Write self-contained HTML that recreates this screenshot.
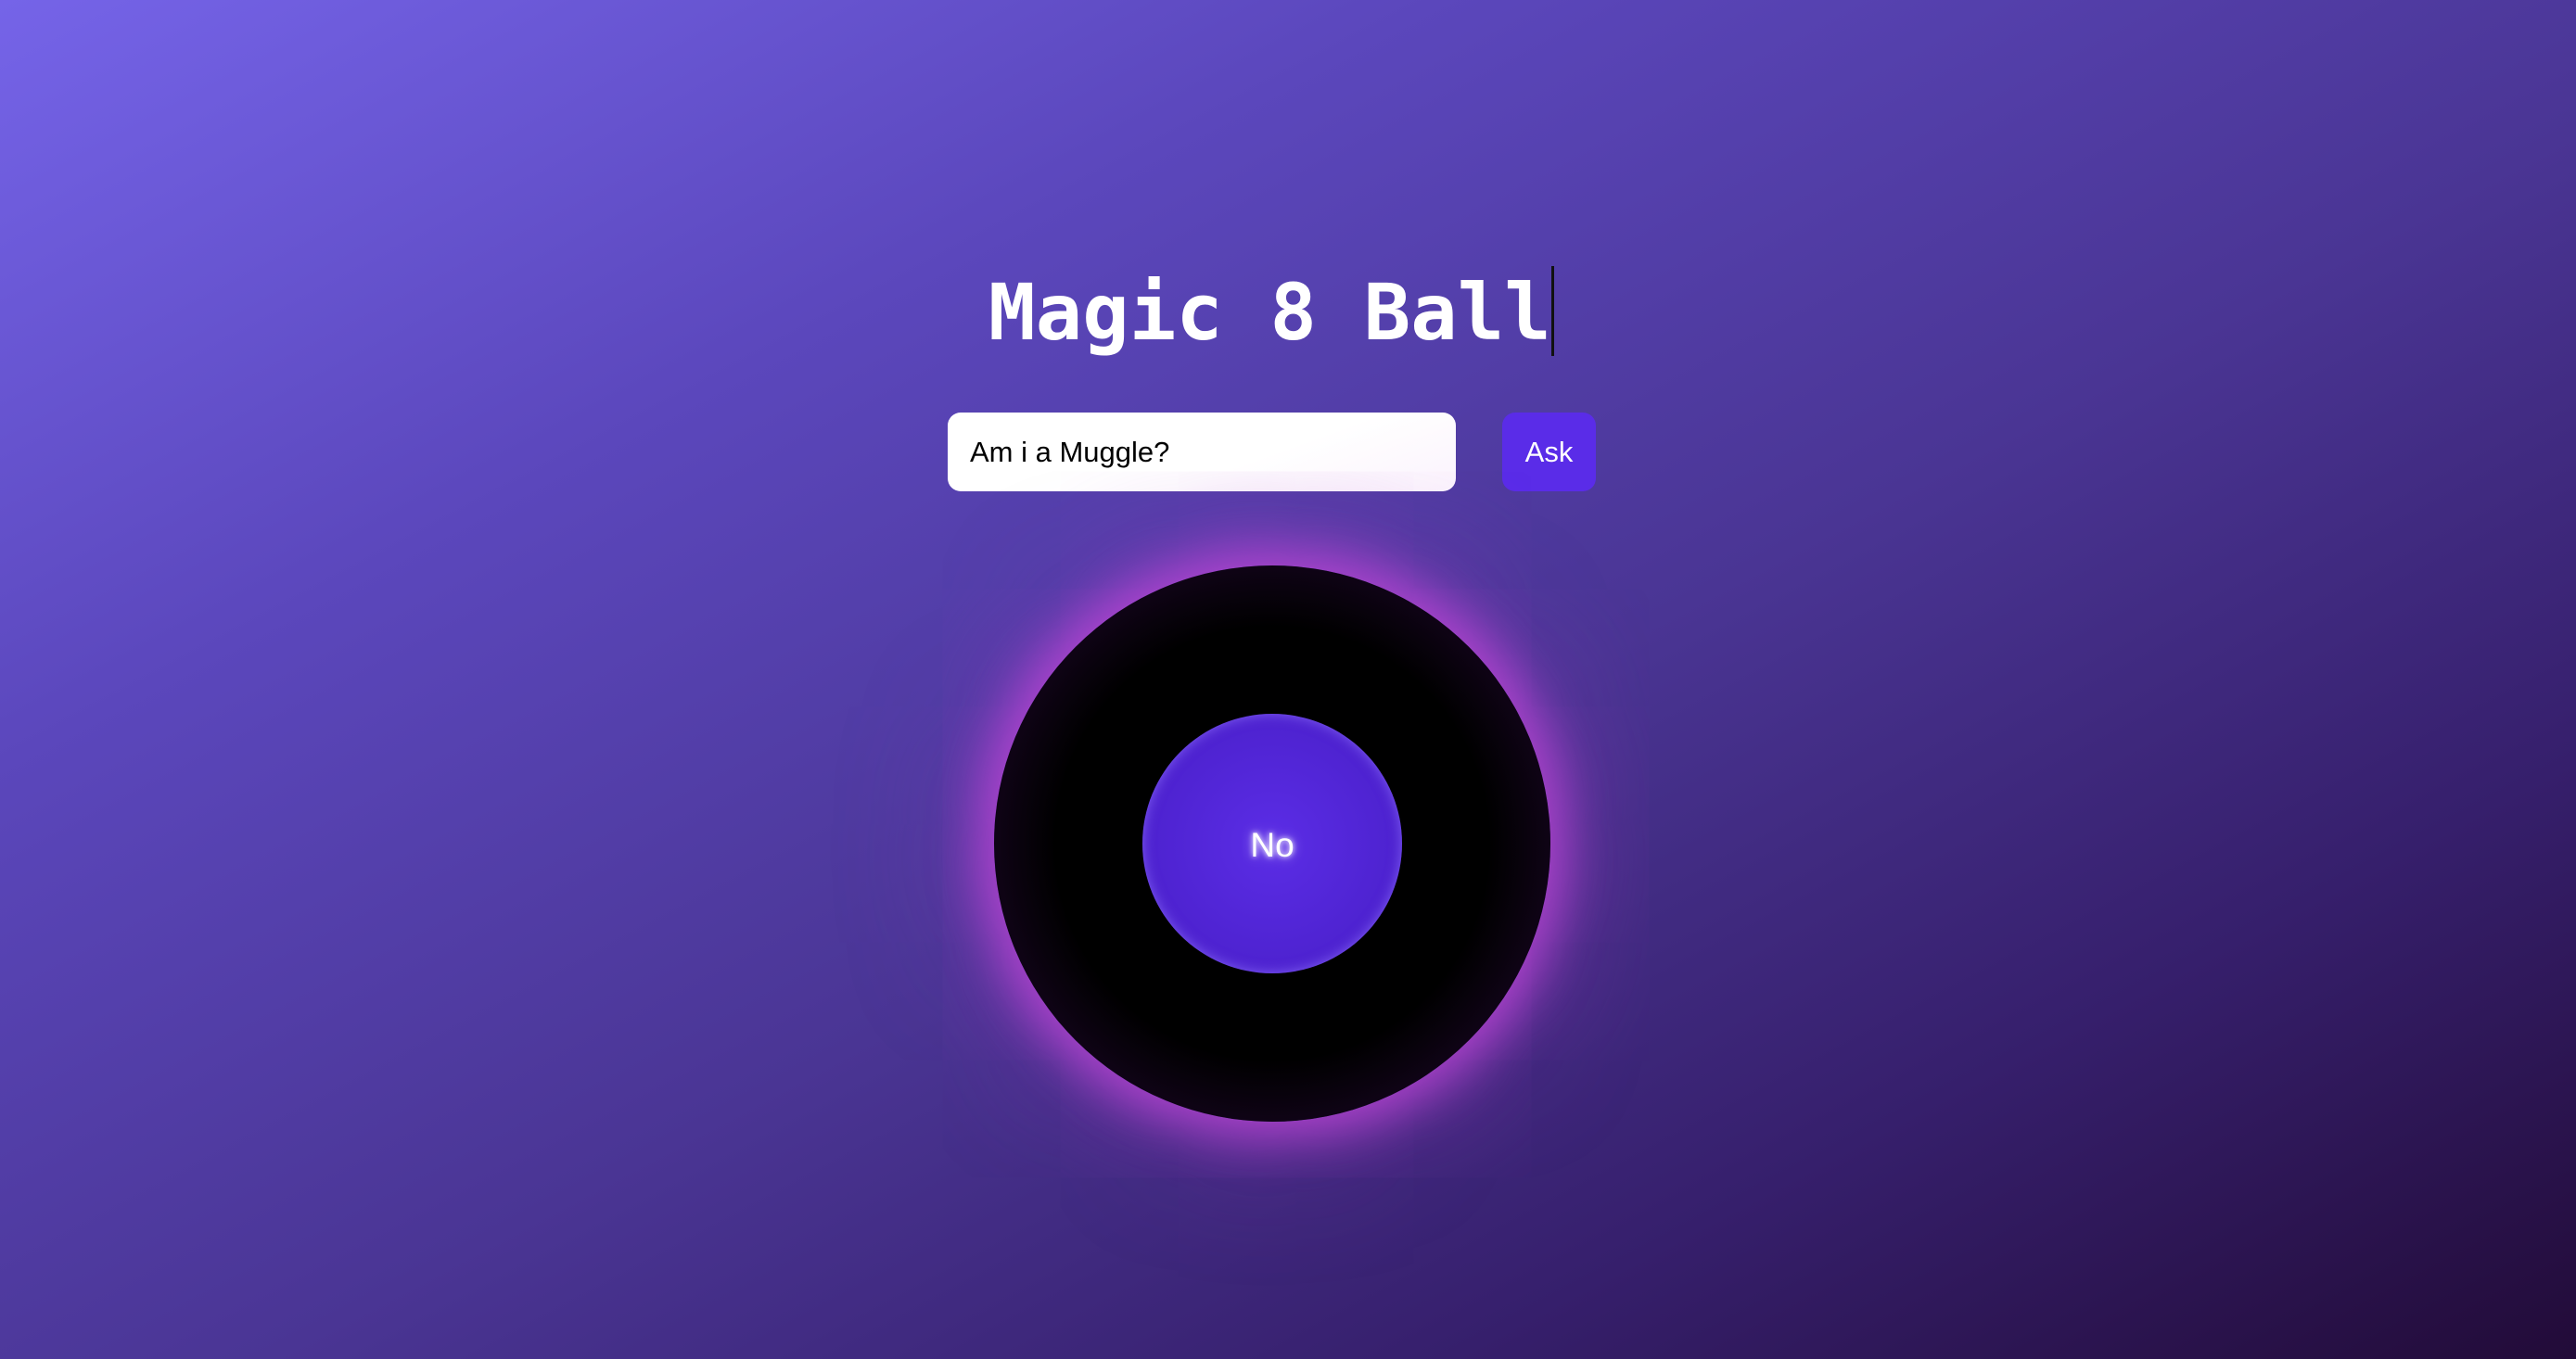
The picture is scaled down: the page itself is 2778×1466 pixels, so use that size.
<!DOCTYPE html>
<html><head><style>
html,body{margin:0;padding:0;width:2778px;height:1466px;overflow:hidden}
body{background:linear-gradient(152deg,#7564e8 0%,#5b47bc 28%,#4a3594 55%,#361f6c 78%,#220b38 100%);position:relative;font-family:"Liberation Sans",Arial,sans-serif}
.title{position:absolute;left:1066px;top:277px;font-family:"DejaVu Sans Mono","Liberation Mono",monospace;font-weight:bold;font-size:84px;color:#fff;line-height:120px;white-space:nowrap}
.cursor{position:absolute;left:1673px;top:287px;width:3px;height:97px;background:#111}
.input{position:absolute;left:1022px;top:445px;width:548px;height:85px;background:linear-gradient(160deg,#fff 60%,#fbf3fd);border-radius:14px;box-sizing:border-box;padding-left:24px;font-size:31px;line-height:85px;color:#000}
.btn{position:absolute;left:1620px;top:445px;width:101px;height:85px;background:#5a2ce8;border-radius:14px;color:#fff;font-size:31px;line-height:85px;text-align:center}
.ball{position:absolute;left:1072px;top:610px;width:600px;height:600px;border-radius:50%;background:radial-gradient(circle,#000 0%,#000 55%,#12041a 74%,#3a1045 90%,#5a1a66 100%);box-shadow:0 0 50px 18px rgba(190,70,215,.8),0 0 140px 40px rgba(170,60,200,.35)}
.inner{position:absolute;left:1232px;top:770px;width:280px;height:280px;border-radius:50%;background:radial-gradient(circle,#5b2de6 0%,#4d22cf 70%,#5a35d8 100%);box-shadow:inset 0 0 14px rgba(150,120,255,.7)}
.no{position:absolute;left:1232px;top:772px;width:280px;height:280px;line-height:280px;text-align:center;color:#fff;font-size:37px;text-shadow:0 0 6px #fff,0 0 12px #c9b8ff}
</style></head><body>
<div class="title">Magic 8 Ball</div>
<div class="cursor"></div>
<div class="input">Am i a Muggle?</div>
<div class="btn">Ask</div>
<div class="ball"></div>
<div class="inner"></div>
<div class="no">No</div>
</body></html>
